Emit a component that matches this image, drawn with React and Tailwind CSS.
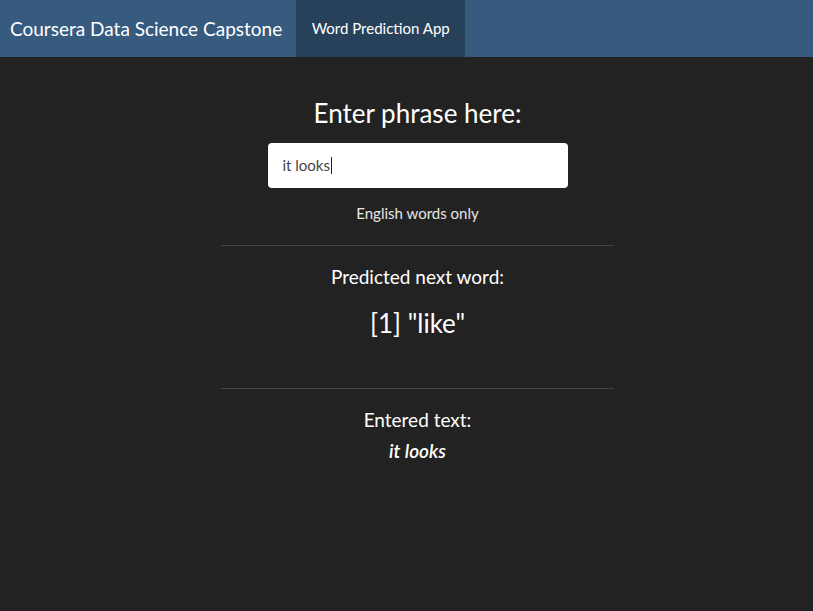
import React from "react";

export default function App() {
  return (
    <div className="min-h-[611px] bg-[#222222] text-white font-['Lato','Liberation_Sans',sans-serif]">
      <nav className="h-[57px] bg-[#375a7f] flex items-stretch">
        <div className="pl-[10px] pr-[14px] flex items-center text-[19px] leading-none">
          Coursera Data Science Capstone
        </div>
        <div className="w-[169px] bg-[#28415b] flex items-center justify-center text-[15px] leading-none pb-px">
          Word Prediction App
        </div>
      </nav>

      <div className="ml-[221px] w-[393px] text-center">
        <h3 className="mt-[38px] text-[26px] leading-[36px]">Enter phrase here:</h3>
        <div className="mt-[12px] flex justify-center">
          <div className="w-[300px] h-[45px] bg-white rounded-[4px] flex items-center pl-[15px] text-[15px] text-[#464545]">
            it looks
            <span className="inline-block w-px h-[17px] bg-[#222222] ml-px" />
          </div>
        </div>
        <p className="mt-[15px] text-[15px] leading-[20px] text-[#e6e6e6]">English words only</p>

        <hr className="mt-[22px] border-t border-[#464545]" />
        <h4 className="mt-[19px] text-[19px] leading-[24px]">Predicted next word:</h4>
        <div className="mt-[17px] text-[26px] leading-[34px]">[1] "like"</div>

        <hr className="mt-[48px] border-t border-[#464545]" />
        <h4 className="mt-[19px] text-[19px] leading-[24px]">Entered text:</h4>
        <div className="mt-[7px] text-[19px] leading-[24px] italic font-semibold">it looks</div>
      </div>
    </div>
  );
}
